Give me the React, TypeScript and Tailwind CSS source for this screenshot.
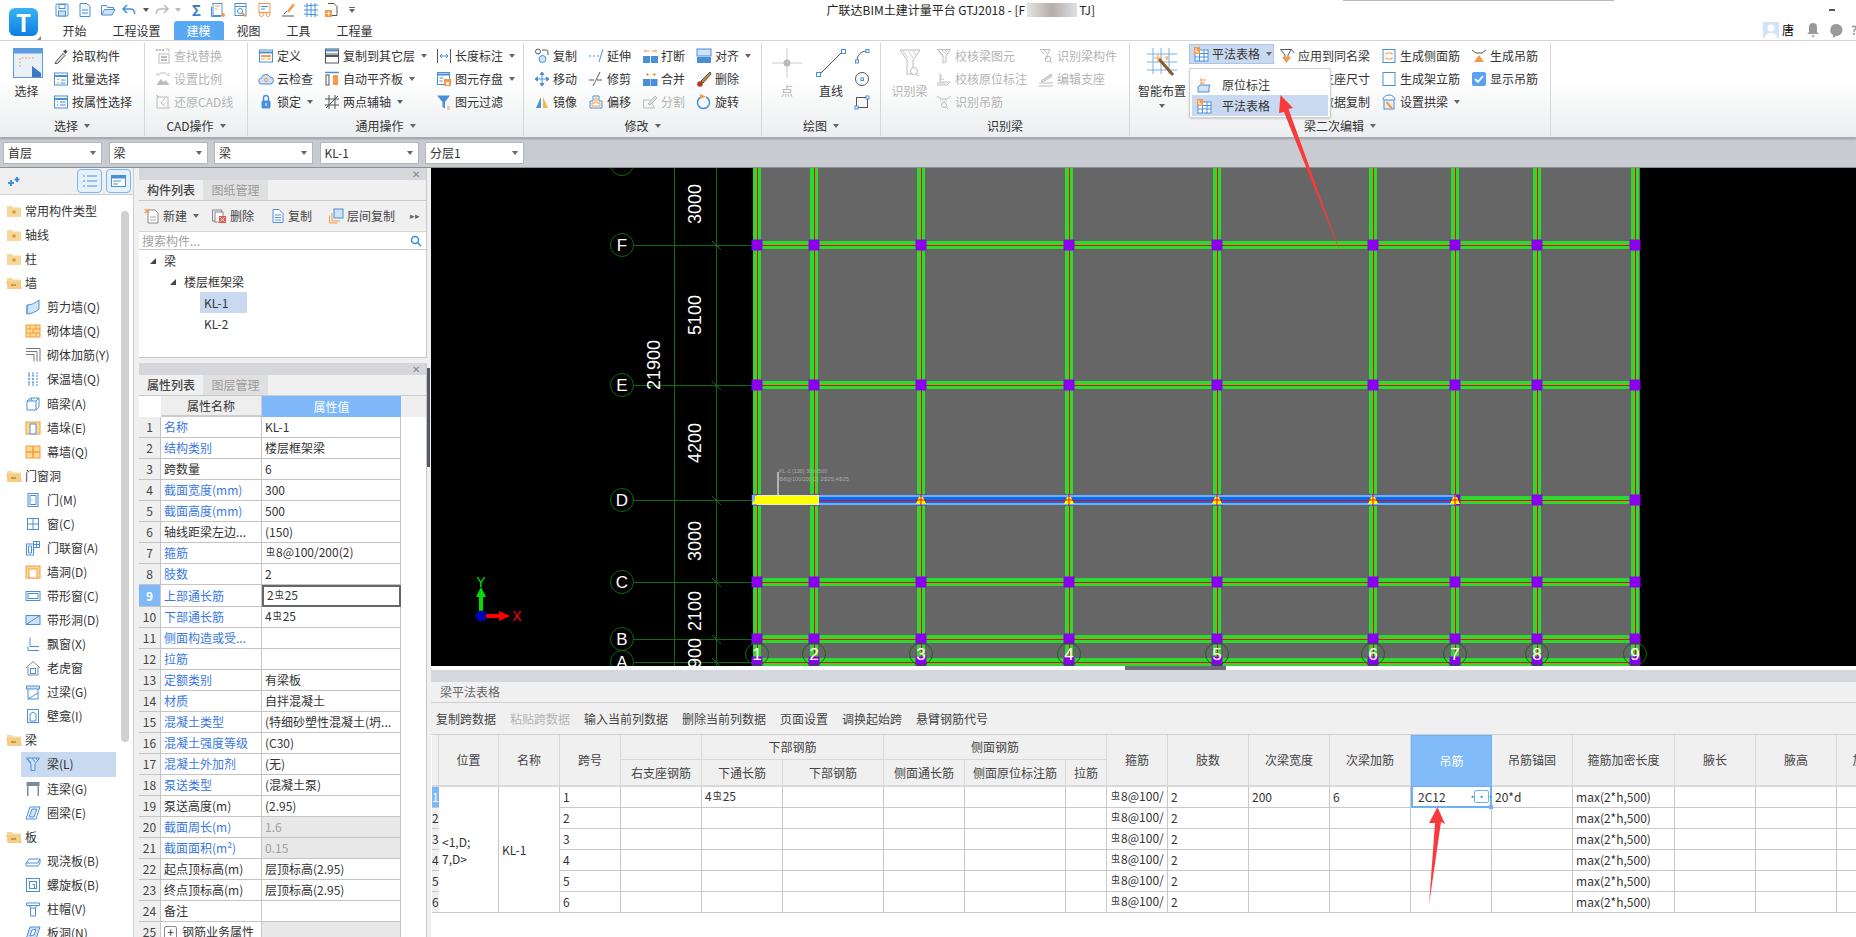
import React from 'react'

const B = '#4a90d9'
const O = '#f59a4a'
const G = '#bcbcbc'
const D = '#555'
const L = '#cfe2f7'

const icons: Record<string, React.ReactNode> = {
  save: <><rect x="2" y="2" width="12" height="12" rx="1" stroke={B} /><rect x="5" y="2.5" width="6" height="4" stroke={B} /><rect x="4.5" y="9" width="7" height="5" fill={L} stroke={B} /></>,
  newdoc: <><path d="M3 1.5h7l3 3v10H3z" stroke={B} fill="#eef5fc" /><path d="M5 8h6M5 11h6" stroke={B} /></>,
  open: <><path d="M1.5 13V3.5h5l1 2h6V8" stroke={B} /><path d="M1.5 13l3-5.5h10.5L12 13z" stroke={B} fill={L} /></>,
  undo: <path d="M6 3L2 7l4 4M2.5 7H10a4 4 0 0 1 3.5 5" stroke={B} strokeWidth="1.6" />,
  redo: <path d="M10 3l4 4-4 4M13.5 7H6a4 4 0 0 0-3.5 5" stroke={G} strokeWidth="1.6" />,
  report: <><rect x="3" y="1.5" width="9" height="12" stroke={B} /><path d="M5 4h5M5 7h2" stroke={O} /><path d="M1.5 5v9.5H11" stroke={B} /><circle cx="13" cy="13" r="2" fill={O} /></>,
  viewrep: <><rect x="2" y="1.5" width="11" height="12" stroke={B} /><path d="M2 4.5h11" stroke={B} /><circle cx="7" cy="9" r="2.5" stroke={B} /><path d="M9 11l4 3.5" stroke={O} strokeWidth="2" /></>,
  glasses: <><rect x="2" y="1.5" width="11" height="9" stroke={O} /><path d="M4 4.5h7M4 7h4" stroke={B} /><circle cx="4.5" cy="12.5" r="2" stroke={O} /><circle cx="11" cy="12.5" r="2" stroke={O} /></>,
  brush: <><path d="M13 1.5L7 9l2 1.5L15 3z" fill={O} /><path d="M7 9l-3 3M2 14h12" stroke={D} /></>,
  gridq: <path d="M4 1v14M8 1v14M12 1v14M1 4l14-1M1 8h14M1 12l14 1" stroke={B} />,
  docplus: <><path d="M4 1.5h6l3 3v9H8" stroke={D} /><rect x="1" y="8" width="7" height="7" fill={O} /><path d="M4.5 9.5v4M2.5 11.5h4" stroke="#fff" /></>,
  pick: <><path d="M3 13.5l7-8 2 2-7 7.5-3 1z" fill="#ddd" stroke={D} /><path d="M10 3.5l2.5-2 2 2-2 2.5z" fill={D} /></>,
  batch: <><rect x="1.5" y="2" width="13" height="12" stroke={B} /><path d="M1.5 5h13" stroke={B} strokeWidth="2" /><path d="M4 8l1 1 1.5-1.5M4 11.5l1 1 1.5-1.5" stroke={O} /><path d="M8 9h4.5M8 12h4.5" stroke={B} /></>,
  attr: <><rect x="1.5" y="2" width="13" height="12" stroke={B} /><path d="M1.5 5h13" stroke={B} strokeWidth="2" /><path d="M4 8h1M4 11h1M7 8h5.5M7 11h5.5" stroke={B} /></>,
  find: <><rect x="4" y="6" width="10" height="9" stroke={G} /><path d="M6 9h6M6 12h6M1 2h2M4 2h2M7 2h2" stroke={G} strokeWidth="2" /><path d="M11 1h3v3" stroke={G} /></>,
  scale: <><path d="M2 2v3M14 2v3M5 2h6M5 4l-2-1M11 4l2-1" stroke={G} /><path d="M1.5 14l4-6 3 3 2-2 4 5z" fill={G} /></>,
  restore: <><rect x="2" y="3" width="11" height="11" stroke={G} /><path d="M6 9l4-5M6 9l4 3M1 1l3 2M13 15l2-2" stroke={G} /></>,
  define: <><rect x="1.5" y="2" width="13" height="12" fill="#fff" stroke={B} /><path d="M1.5 4.5h13" stroke={B} strokeWidth="2" /><rect x="3" y="7" width="10" height="2" fill={O} /><path d="M3 11h4M9 11h4" stroke={O} /></>,
  cloud: <><path d="M4 13a3 3 0 0 1-.5-6 4.5 4.5 0 0 1 8.5-1 3.5 3.5 0 0 1 0 7z" fill={L} stroke={B} /><circle cx="8" cy="9" r="1.7" stroke={O} /></>,
  lock: <><rect x="3.5" y="6.5" width="9" height="8" rx="1.5" fill={B} /><path d="M5.5 7V4a2.5 2.5 0 0 1 5 0v3" stroke={B} strokeWidth="1.5" /><rect x="7.5" y="9" width="1" height="3" fill="#fff" /></>,
  copylayer: <><rect x="1.5" y="1" width="13" height="7" fill="#fff" stroke={D} /><path d="M1.5 2.5h13" stroke={B} strokeWidth="2" /><rect x="1.5" y="6" width="13" height="9" fill="#fff" stroke={D} /><path d="M1.5 8h13" stroke={D} strokeWidth="2" /></>,
  autoalign: <><path d="M1 1.5h14" stroke={B} strokeWidth="1.5" /><rect x="2" y="4" width="3" height="10" stroke={D} /><rect x="9" y="4" width="5" height="10" fill={O} /></>,
  twopoint: <path d="M5 1v14M11 1v14M1 5h14M1 11h14M2 14L14 2" stroke={D} />,
  dim: <><path d="M1.5 1v14M14.5 1v14" stroke={D} /><path d="M4 8h8M4 8l2-2M4 8l2 2M12 8l-2-2M12 8l-2 2" stroke={B} /></>,
  store: <><rect x="1.5" y="1.5" width="12" height="12" stroke={B} /><path d="M1.5 3.5h12" stroke={B} strokeWidth="2" /><path d="M3.5 7h4M3.5 10h3" stroke={B} /><rect x="8" y="8" width="7" height="7" fill={O} /><rect x="10" y="11" width="3" height="3" fill="#fff" /></>,
  filter: <><path d="M1 1.5h13L9 8v6.5L6.5 13V8z" fill={B} /><path d="M11 13h3M11 15h3" stroke={O} /></>,
  copy: <><circle cx="4" cy="3.5" r="2.5" stroke={D} /><circle cx="8.5" cy="11" r="3.5" fill={L} stroke={B} /><path d="M8 2h4a2 2 0 0 1 2 2v3" stroke={D} /></>,
  move: <path d="M8 1v14M1 8h14M8 1L6 3.5h4zM8 15l-2-2.500h4zM1 8l2.500-2v4zM15 8l-2.500-2v4z" stroke={B} fill={B} />,
  mirror: <><path d="M7 3v11H2z" fill={B} /><path d="M9 3v11h5z" fill="#f5b73d" /></>,
  extend: <path d="M1 8h2M5 8h2M9 8h2M15 1L11 14" stroke={B} />,
  trim: <path d="M1 9h5M9 9h5M12 1L5 15" stroke={D} strokeDasharray="3 0" />,
  offset: <><path d="M2 14V7h3V2h6v5h3v7z" stroke={B} fill="#fff" /><path d="M4 12V9h3V4h2v5h3v3z" stroke={O} /></>,
  breakb: <><path d="M3 3h4M10 3h4M3 1.500v3M14 1.500v3" stroke={O} /><rect x="1" y="8" width="7" height="7" fill={B} /><rect x="9" y="8" width="7" height="7" fill={B} /></>,
  merge: <><path d="M4 3.500h3M11 3.500h3M5.500 2v3M12.500 2v3" stroke={O} /><rect x="1" y="8" width="7" height="7" fill={B} /><rect x="8.500" y="8" width="7" height="7" fill={B} /></>,
  split: <><path d="M1.500 14V6h7l4 8z" stroke={G} /><path d="M6 10l7-8 2 2-7 7z" fill="#ddd" stroke={G} /></>,
  align: <><rect x="1" y="1" width="14" height="7" fill={L} stroke={B} /><rect x="1" y="9" width="14" height="6" fill={B} /></>,
  erase: <><path d="M14 1L5 10l2 2 8-9z" fill="#c98a3a" stroke={D} /><circle cx="4" cy="13" r="2.800" fill="#b4381c" /></>,
  rotate: <><path d="M5 3a6 6 0 1 0 5 0" stroke={B} strokeWidth="1.500" /><path d="M4 0l6 2.500-6 2.500z" fill={O} /></>,
  arc: <><path d="M3 13C3 7 7 3 13 3" stroke={D} /><rect x="1.500" y="12" width="3" height="3" stroke={B} fill="#fff" /><rect x="12" y="1.500" width="3" height="3" stroke={B} fill="#fff" /></>,
  circle: <><circle cx="8" cy="8" r="6.500" stroke={D} /><rect x="7" y="7" width="2.500" height="2.500" stroke={B} /></>,
  rect: <><rect x="2.500" y="3.500" width="11" height="10" stroke={D} /><rect x="1" y="12" width="3" height="3" stroke={B} fill="#fff" /><rect x="12" y="2" width="3" height="3" stroke={B} fill="#fff" /></>,
  chkbeam: <><path d="M1.500 1.500h13L10 8v6L7 15V8z" stroke={G} /><path d="M3 3l4 4M6 2l4 4M9 2l2 2" stroke={G} /></>,
  chksite: <><path d="M2 14h9l3-3H4V2" stroke={G} /><path d="M4 8h4M4 5h2" stroke={G} /><rect x="1" y="11" width="9" height="4" fill="#ddd" /></>,
  hang: <><path d="M1 2l4 3h6l4-3" stroke={G} /><path d="M4 7h8" stroke={G} strokeDasharray="1 1" /><circle cx="8" cy="11" r="2.500" stroke={G} /><path d="M10 13l2 2" stroke={G} /></>,
  beamc: <><path d="M2 1.500h10L9 7v4" stroke={G} /><path d="M3 3l3 3M6 2l3 3" stroke={G} /><circle cx="10" cy="11" r="2.800" stroke={G} /><path d="M12 13l2 2" stroke={G} /></>,
  editsup: <><path d="M1 12h14M1 15h14" stroke={G} /><path d="M3 10L13 3l1 2-9 6z" fill="#ddd" stroke={G} /></>,
  table: <><rect x="2" y="4" width="13" height="11" fill="#fff" stroke={B} /><path d="M6.500 4v11M11 4v11M2 7.500h13M2 11h13" stroke={B} /><rect x="1" y="1" width="6" height="7" fill={O} /><path d="M3 2.500V6h2.500" stroke="#fff" /></>,
  inplace: <><path d="M5 1v7M5 3h5M5 6h4" stroke={O} /><path d="M2 10l2-2h10l-1 2v5H2z" fill={L} stroke={B} /></>,
  apply: <><path d="M1.500 1.500h11L9 7v3H6V7z" stroke={D} /><path d="M13 1.500L15 5" stroke={B} /><path d="M3 9h9l-4.500 6z" fill={O} /></>,
  side: <><rect x="2" y="1.500" width="12" height="13" stroke={B} /><path d="M5 7V5h6v2M5 9v2h6V9" stroke={O} /></>,
  erect: <><rect x="2" y="1.500" width="12" height="13" stroke={B} /><path d="M6 5h.1M10 5h.1M6 11h.1M10 11h.1" stroke={O} strokeWidth="2.500" /></>,
  arch: <><path d="M2 6a6 5 0 0 1 12 0" stroke={B} /><rect x="3" y="6" width="10" height="9" fill="#eee" stroke={B} /><path d="M6 7l6 7-2 1-5-6z" fill={O} /></>,
  genhang: <><path d="M1 2l4 3h6l4-3" stroke={D} /><path d="M3 14h10L8 7z" fill={O} /></>,
  check: <><rect x="1" y="1" width="14" height="14" rx="2" fill="#5aa2f0" /><path d="M4 8l3 3 5-6" stroke="#fff" strokeWidth="1.800" /></>,
  shear: <><path d="M2 6c4 0 9-2 12-5v9c-3 3-8 5-12 5z" fill={L} stroke={B} /><path d="M2 6v9" stroke={B} /></>,
  brick: <><rect x="1" y="2" width="14" height="12" fill="#fbdc8b" stroke={O} /><path d="M1 6h14M1 10h14M5 2v4M11 2v4M8 6v4M5 10v4M11 10v4" stroke={O} /></>,
  rein: <path d="M1 1.500h14v13M1 4.500h11v10M1 7.500h8v7" stroke="#777" />,
  insul: <path d="M4 1v14M8 1v14M12 1v14M3 4h2M3 8h2M3 12h2M7 4h2M7 8h2M7 12h2" stroke={B} strokeDasharray="2 1" />,
  hidden: <><path d="M2 5l4-3h8v9l-3 3H2z" fill="#fff" stroke={B} /><path d="M2 5h9v9M11 5l3-3M6 2l1 3" stroke={B} /></>,
  pilaster: <><rect x="1" y="2" width="14" height="12" fill="#fbdc8b" stroke={O} /><rect x="5" y="4" width="6" height="10" fill="#fff" stroke={B} /></>,
  curtain: <><rect x="1" y="2" width="14" height="12" fill="#fbdc8b" stroke={O} /><path d="M8 2v12M1 8h14" stroke={O} strokeWidth="1.500" /></>,
  door: <><rect x="3" y="1.500" width="10" height="13" stroke={B} /><rect x="5" y="3.500" width="6" height="9" stroke={B} /><path d="M6.500 8h1" stroke={B} /></>,
  win: <><rect x="2.500" y="2.500" width="11" height="11" stroke={B} /><path d="M8 2.500v11M2.500 8h11" stroke={B} /></>,
  doorwin: <><rect x="1.500" y="4" width="7" height="11" stroke={B} /><path d="M3.500 6h3v7h-3z" stroke={B} /><rect x="8.500" y="1.500" width="6" height="6" stroke={B} /><path d="M11.500 1.500v6M8.500 4.500h6" stroke={B} /></>,
  hole: <><rect x="1" y="2" width="14" height="12" fill="#fbdc8b" stroke={O} /><rect x="4" y="5" width="8" height="9" fill="#fff" stroke={O} /></>,
  strip: <><rect x="1" y="3.500" width="14" height="9" stroke={B} /><rect x="3" y="5.500" width="10" height="5" stroke={B} /></>,
  striph: <><rect x="1" y="3.500" width="14" height="9" stroke={B} fill={L} /><path d="M1 12.500L15 3.500" stroke={B} /></>,
  bay: <path d="M5 1.500v9h9M3 10.500v4h11" stroke={B} />,
  dormer: <><path d="M1 8l7-6.500L15 8M3 7v8h10V7" stroke="#888" /><rect x="5.500" y="8.500" width="5" height="5" stroke={B} /></>,
  lintel: <><path d="M1.500 2h13v3h-13z" stroke={B} fill={L} /><path d="M3 5v10h10V5" stroke={B} /><path d="M3 15l10-6" stroke={B} /></>,
  niche: <><rect x="2.500" y="1.500" width="11" height="13" stroke={B} /><path d="M5 13V6l3-2 3 2v7z" stroke={B} /></>,
  beam: <><path d="M1.500 2h13L10 8v6.500H6V8z" stroke={B} fill={L} /><path d="M3 3l3 4M7 2l3 4M11 2l1 2" stroke={B} /></>,
  link: <><rect x="1.500" y="1" width="13" height="4" fill="#7a8aa0" /><path d="M3 5v10M13 5v10M2.500 5v10M13.500 5v10" stroke="#7a8aa0" /></>,
  ring: <><path d="M5 2h10l-4 12H1z" stroke={B} /><path d="M7 4h5l-3 8H4z" stroke={B} fill={L} /></>,
  slab: <><path d="M1 10l3-4h11l-2 4z" stroke={B} fill="#fff" /><path d="M1 10v3h12l2-3V6" stroke={B} /></>,
  spiral: <><rect x="1.500" y="1.500" width="13" height="13" stroke={B} /><rect x="4.500" y="4.500" width="7" height="7" stroke={B} /><path d="M7.500 7.500h2v4" stroke={B} /></>,
  cap: <><path d="M1.500 2h13v2.500h-13zM4 4.500l2 2.500h4l2-2.500M5.500 7v8h5V7" stroke={B} /></>,
  slabh: <><path d="M5 2h10l-4 12H1z" fill={L} stroke={B} /><path d="M7 5l4-1-2 6-4 1z" fill="#fff" stroke={B} /></>,
  pnew: <><path d="M4 2h7l3 3v10H4z" fill="#fff" stroke="#888" /><path d="M6 9h6M6 12h6" stroke="#aaa" /><path d="M1 1l4 4M5 1L1 5" stroke={O} strokeWidth="1.500" /></>,
  pdel: <><rect x="1.500" y="2" width="9" height="11" stroke="#888" /><rect x="4" y="4" width="8" height="10" fill="#fff" stroke="#888" /><rect x="8" y="8" width="7" height="7" fill="#e45a4a" /><path d="M9.500 9.500l4 4M13.500 9.500l-4 4" stroke="#fff" /></>,
  pcopy: <><path d="M3 1.500h6l4 4v9H3z" fill="#fff" stroke={B} /><path d="M5 7h6M5 9.500h6M5 12h6" stroke={B} /></>,
  player: <><rect x="6" y="1" width="9" height="9" fill={L} stroke={B} /><path d="M4 5v8h8M1.500 7.500V15h8" stroke={O} /></>,
}

function Ic({ n, s = 16 }: { n: string; s?: number }) {
  return <svg width={s} height={s} viewBox="0 0 16 16" fill="none" className="flex-none">{icons[n]}</svg>
}

function Caret() {
  return <span className="ml-[6px] inline-block border-x-[3px] border-t-[4px] border-x-transparent border-t-[#666]" />
}

function Item({ icon, label, arrow, off }: { icon: string; label: string; arrow?: boolean; off?: boolean }) {
  return (
    <div className="flex h-[23px] items-center whitespace-nowrap">
      <span className="w-[19px] flex-none"><Ic n={icon} /></span>
      <span className={off ? 'text-[#b4b4b4]' : ''}>{label}</span>
      {arrow && <Caret />}
    </div>
  )
}

function Col({ w, children }: { w: number; children: React.ReactNode }) {
  return <div className="flex flex-none flex-col" style={{ width: w }}>{children}</div>
}

function Group({ w, pl, label, arrow, children }: { w: number; pl: number; label: string; arrow?: boolean; children: React.ReactNode }) {
  return (
    <div className="flex flex-none flex-col border-r border-[#d4d6d8] h-[93px]" style={{ width: w }}>
      <div className="flex h-[73px] pt-[1px]" style={{ paddingLeft: pl }}>{children}</div>
      <div className="flex h-[20px] items-center justify-center">{label}{arrow && <Caret />}</div>
    </div>
  )
}

function Big({ w, label, off, children, arrow }: { w: number; label: string; off?: boolean; children: React.ReactNode; arrow?: boolean }) {
  return (
    <div className="flex flex-none flex-col items-center" style={{ width: w }}>
      <div className="flex h-[34px] items-center justify-center">{children}</div>
      <div className={`mt-[5px] whitespace-nowrap ${off ? 'text-[#b4b4b4]' : ''}`}>{label}</div>
      {arrow && <span className="mt-[5px] inline-block border-x-[3px] border-t-[4px] border-x-transparent border-t-[#666]" />}
    </div>
  )
}

const quick: [string, number][] = [['save', 24], ['newdoc', 23], ['open', 23], ['undo', 18.5], ['', 15.5], ['redo', 16], ['', 17], ['S', 20], ['report', 22], ['viewrep', 24], ['glasses', 24], ['brush', 23.5], ['gridq', 22], ['docplus', 20.5], ['more', 18]]

function TitleBar() {
  return (
    <div className="relative flex h-[41px] border-b border-[#d8d8d8] bg-white">
      <div className="relative w-[49.5px] flex-none">
        <div className="absolute left-[9px] top-[8px] flex h-[28px] w-[29px] items-center justify-center rounded-[6px] bg-linear-to-b from-[#35b4f2] to-[#0f7fe0]">
          <span className="text-[24px] font-bold leading-none text-white">T</span>
        </div>
        <span className="absolute left-[37px] top-[36px] border-b-[4px] border-l-[4px] border-b-[#888] border-l-transparent" />
      </div>
      <div className="flex flex-1 flex-col">
        <div className="flex h-[21px] items-center">
          {quick.map(([n, w], i) => (
            <div key={i} className="flex h-[16px] items-center justify-center" style={{ width: w }}>
              {n === 'S' ? <span className="text-[15px] font-bold leading-[16px] text-[#3f7fc4]">Σ</span>
                : n === '' ? <span className={`border-x-[3px] border-t-[4px] border-x-transparent ${i === 4 ? 'border-t-[#555]' : 'border-t-[#bbb]'}`} />
                : n === 'more' ? <span className="flex flex-col items-center gap-[1px]"><span className="h-[1px] w-[6px] bg-[#666]" /><span className="border-x-[3px] border-t-[4px] border-x-transparent border-t-[#666]" /></span>
                : <Ic n={n} />}
            </div>
          ))}
          <div className="ml-[466px] flex items-center whitespace-nowrap text-[#222]">
            <span>广联达BIM土建计量平台 GTJ2018 - [F</span>
            <span className="mx-[2px] h-[14px] w-[50px] bg-linear-to-r from-[#e4e4e4] via-[#b5ada8] to-[#dfdfe6]" />
            <span>TJ]</span>
          </div>
          <span className="ml-auto mr-[21px] h-[2px] w-[6px] bg-[#555]" />
        </div>
        <div className="flex h-[20px] items-end">
          {['开始', '工程设置', '建模', '视图', '工具', '工程量'].map(t => (
            <div key={t} className={`flex h-[19px] items-center px-[13px] ${t === '建模' ? 'rounded-t-[3px] bg-[#58a8f2] text-white' : ''}`}>{t}</div>
          ))}
          <div className="ml-auto flex h-[20px] items-center">
            <div className="flex h-[16px] w-[16px] items-center justify-center bg-[#cfe4fb]">
              <svg width="12" height="16" viewBox="0 0 12 16"><circle cx="6" cy="6" r="3.500" fill="#fff" /><path d="M0 16c0-4 3-5 6-5s6 1 6 5z" fill="#fff" /></svg>
            </div>
            <span className="ml-[3px] w-[24px] text-black">唐</span>
            <svg width="14" height="16" viewBox="0 0 14 16" className="mr-[9px]"><path d="M7 1a4 4 0 0 0-4 4v5l-2 2h12l-2-2V5a4 4 0 0 0-4-4zM5 13.500h4l-2 2z" fill="#999" /></svg>
            <svg width="15" height="15" viewBox="0 0 15 15" className="mr-[7px]"><path d="M7.500 1a6 6 0 0 1 0 12H7l-3 2v-3A6 6 0 0 1 7.500 1z" fill="#999" /><path d="M4.500 7h.1M7.500 7h.1M10.500 7h.1" stroke="#fff" strokeWidth="1.500" /></svg>
            <span className="w-[5px] overflow-hidden font-bold text-[#999]">?</span>
          </div>
        </div>
      </div>
      <div className="absolute left-[1343px] top-0 h-[1px] w-[271px] bg-[#bbb]" />
    </div>
  )
}

function Ribbon() {
  return (
    <div className="relative flex h-[97px] flex-none items-start border-b border-[#a6a9ad] bg-linear-to-b from-white from-40% to-[#eceeef] pt-[2px] shadow-[0_1px_2px_#9a9da1]">
      <Group w={145} pl={0} label="选择" arrow>
        <Big w={53} label="选择">
          <svg width="30" height="30" viewBox="0 0 30 30" className="ml-[2px] mt-[4px]"><rect x="0.500" y="0.500" width="29" height="29" fill="#eaf0f8" stroke="#5b9be0" /><rect x="0.500" y="0.500" width="29" height="5" fill="#5b9be0" /><path d="M7 19V10h14" stroke="#f59a4a" strokeDasharray="2 1.500" fill="none" /><path d="M19 18l9 7v4H19z" fill="#3d78c0" /></svg>
        </Big>
        <Col w={90}>
          <Item icon="pick" label="拾取构件" />
          <Item icon="batch" label="批量选择" />
          <Item icon="attr" label="按属性选择" />
        </Col>
      </Group>
      <Group w={103} pl={10} label="CAD操作" arrow>
        <Col w={90}>
          <Item icon="find" label="查找替换" off />
          <Item icon="scale" label="设置比例" off />
          <Item icon="restore" label="还原CAD线" off />
        </Col>
      </Group>
      <Group w={276} pl={10} label="通用操作" arrow>
        <Col w={66}>
          <Item icon="define" label="定义" />
          <Item icon="cloud" label="云检查" />
          <Item icon="lock" label="锁定" arrow />
        </Col>
        <Col w={112}>
          <Item icon="copylayer" label="复制到其它层" arrow />
          <Item icon="autoalign" label="自动平齐板" arrow />
          <Item icon="twopoint" label="两点辅轴" arrow />
        </Col>
        <Col w={88}>
          <Item icon="dim" label="长度标注" arrow />
          <Item icon="store" label="图元存盘" arrow />
          <Item icon="filter" label="图元过滤" />
        </Col>
      </Group>
      <Group w={238} pl={10} label="修改" arrow>
        <Col w={54}>
          <Item icon="copy" label="复制" />
          <Item icon="move" label="移动" />
          <Item icon="mirror" label="镜像" />
        </Col>
        <Col w={54}>
          <Item icon="extend" label="延伸" />
          <Item icon="trim" label="修剪" />
          <Item icon="offset" label="偏移" />
        </Col>
        <Col w={54}>
          <Item icon="breakb" label="打断" />
          <Item icon="merge" label="合并" />
          <Item icon="split" label="分割" off />
        </Col>
        <Col w={66}>
          <Item icon="align" label="对齐" arrow />
          <Item icon="erase" label="删除" />
          <Item icon="rotate" label="旋转" />
        </Col>
      </Group>
      <Group w={119} pl={0} label="绘图" arrow>
        <Big w={50} label="点" off>
          <svg width="30" height="30" viewBox="0 0 30 30" className="mt-[4px]"><path d="M15 0v30M0 15h30" stroke="#ccc" /><circle cx="15" cy="15" r="3.500" fill="#bbb" /></svg>
        </Big>
        <Big w={38} label="直线">
          <svg width="30" height="30" viewBox="0 0 30 30" className="mt-[4px]"><path d="M3 27L27 3" stroke="#555" /><rect x="0.500" y="24.500" width="4" height="4" fill="#fff" stroke="#4a90d9" /><rect x="25.500" y="1.500" width="4" height="4" fill="#fff" stroke="#4a90d9" /></svg>
        </Big>
        <Col w={20}>
          <div className="ml-[4px] flex h-[23px] items-center"><Ic n="arc" /></div>
          <div className="ml-[4px] flex h-[23px] items-center"><Ic n="circle" /></div>
          <div className="ml-[4px] flex h-[23px] items-center"><Ic n="rect" /></div>
        </Col>
      </Group>
      <Group w={249} pl={10} label="识别梁">
        <Big w={37} label="识别梁" off>
          <svg width="22" height="28" viewBox="0 0 22 28" className="mt-[4px]"><path d="M1 1h20l-7 10v14h-6V11z" fill="none" stroke="#bbb" /><path d="M4 2l5 7M9 2l5 7M14 2l4 5" stroke="#ccc" /><circle cx="15" cy="22" r="3.500" fill="#fff" stroke="#bbb" /><path d="M17 25l3 2" stroke="#bbb" /></svg>
        </Big>
        <div className="w-[8px] flex-none" />
        <Col w={102}>
          <Item icon="chkbeam" label="校核梁图元" off />
          <Item icon="chksite" label="校核原位标注" off />
          <Item icon="hang" label="识别吊筋" off />
        </Col>
        <Col w={90}>
          <Item icon="beamc" label="识别梁构件" off />
          <Item icon="editsup" label="编辑支座" off />
        </Col>
      </Group>
      <Group w={421} pl={8} label="" >
        <Big w={48} label="智能布置" arrow>
          <svg width="30" height="30" viewBox="0 0 30 30" className="mt-[4px]"><path d="M6 0v26M14 0v26M22 0v26M0 6h30M0 14h30M0 22h30" stroke="#7db0e8" /><path d="M12 11l14 16" stroke="#8b5a2b" strokeWidth="3" /><path d="M11 6v8M7 10h8M20 8v4M18 10h4" stroke="#f59a4a" /></svg>
        </Big>
        <div className="w-[3px] flex-none" />
        <Col w={90}>
          <div className="flex h-[20px] w-[85px] items-center border border-[#a9c5e8] bg-[#c9daf0] pl-[3px]">
            <span className="w-[19px] flex-none"><Ic n="table" /></span>
            <span>平法表格</span><Caret />
          </div>
        </Col>
        <Col w={102}>
          <Item icon="apply" label="应用到同名梁" />
          <Item icon="apply" label="刷新支座尺寸" />
          <Item icon="apply" label="梁跨数据复制" />
        </Col>
        <Col w={90}>
          <Item icon="side" label="生成侧面筋" />
          <Item icon="erect" label="生成架立筋" />
          <Item icon="arch" label="设置拱梁" arrow />
        </Col>
        <Col w={70}>
          <Item icon="genhang" label="生成吊筋" />
          <Item icon="check" label="显示吊筋" />
        </Col>
      </Group>
      <div className="absolute left-[1304px] top-[75px] flex h-[20px] items-center whitespace-nowrap">梁二次编辑<Caret /></div>
      <div className="absolute left-[1189px] top-[27px] z-10 flex h-[50px] w-[142px] flex-col rounded-[2px] border border-[#cfcfcf] bg-white px-[2px] pt-[5px] shadow-[0_1px_2px_#ccc]">
        <div className="flex h-[21px] items-center pl-[4px]"><Ic n="inplace" /><span className="ml-[10px]">原位标注</span></div>
        <div className="flex h-[21px] items-center bg-[#c9daf0] pl-[4px]"><Ic n="table" /><span className="ml-[10px]">平法表格</span></div>
      </div>
    </div>
  )
}

function Combo({ label }: { label: string }) {
  return (
    <div className="flex h-[22px] w-[99px] items-center justify-between border border-[#b4b6b9] bg-white px-[4px]">
      <span>{label}</span>
      <span className="mr-[1px] border-x-[3px] border-t-[4px] border-x-transparent border-t-[#666]" />
    </div>
  )
}

const tree: [string, string, number][] = [
  ['常用构件类型', 'c', 0], ['轴线', 'c', 0], ['柱', 'c', 0], ['墙', 'o', 0],
  ['剪力墙(Q)', 'shear', 1], ['砌体墙(Q)', 'brick', 1], ['砌体加筋(Y)', 'rein', 1], ['保温墙(Q)', 'insul', 1], ['暗梁(A)', 'hidden', 1], ['墙垛(E)', 'pilaster', 1], ['幕墙(Q)', 'curtain', 1],
  ['门窗洞', 'o', 0],
  ['门(M)', 'door', 1], ['窗(C)', 'win', 1], ['门联窗(A)', 'doorwin', 1], ['墙洞(D)', 'hole', 1], ['带形窗(C)', 'strip', 1], ['带形洞(D)', 'striph', 1], ['飘窗(X)', 'bay', 1], ['老虎窗', 'dormer', 1], ['过梁(G)', 'lintel', 1], ['壁龛(I)', 'niche', 1],
  ['梁', 'o', 0],
  ['梁(L)', 'beam', 1], ['连梁(G)', 'link', 1], ['圈梁(E)', 'ring', 1],
  ['板', 'o', 0],
  ['现浇板(B)', 'slab', 1], ['螺旋板(B)', 'spiral', 1], ['柱帽(V)', 'cap', 1], ['板洞(N)', 'slabh', 1],
]

function Folder({ open }: { open: boolean }) {
  return (
    <svg width="16" height="14" viewBox="0 0 16 14" className="flex-none">
      <path d="M1 2h5l1 1.500h8V13H1z" fill="#f7d89a" />
      {open ? <path d="M0 5h14l2 8H2z" fill="#f3cd85" /> : <path d="M6 8h4M8 6v4" stroke="#d69a3c" strokeWidth="1.500" />}
      {open && <path d="M5 9h5" stroke="#b98a36" strokeWidth="1.500" />}
    </svg>
  )
}

function LeftPanel() {
  return (
    <div className="flex w-[134px] flex-none flex-col border-r border-[#cfcfcf] bg-white">
      <div className="flex h-[27px] flex-none items-center border-b border-[#cfcfcf] bg-[#f0f0f0] pl-[7px]">
        <svg width="13" height="11" viewBox="0 0 13 11"><path d="M4 4v6M1 7h6" stroke="#3f8fe0" strokeWidth="2" /><path d="M10 1v5M7.500 3.500h5" stroke="#3f8fe0" strokeWidth="2" /></svg>
        <div className="ml-[57px] flex h-[24px] w-[25px] items-center justify-center rounded-[4px] border border-[#7ab5f2] bg-[#e7f1fc]">
          <svg width="14" height="12" viewBox="0 0 14 12"><path d="M4 1h10M4 6h10M4 11h10M0 1h2M0 6h2M0 11h2" stroke="#4a90d9" /></svg>
        </div>
        <div className="ml-[4px] flex h-[24px] w-[25px] items-center justify-center rounded-[4px] border border-[#7ab5f2] bg-[#e7f1fc]">
          <svg width="15" height="12" viewBox="0 0 15 12"><rect x="0.500" y="0.500" width="14" height="11" fill="#fff" stroke="#4a90d9" /><path d="M0 2h15" stroke="#4a90d9" strokeWidth="3" /><path d="M2 6h8M2 9h5" stroke="#4a90d9" /></svg>
        </div>
      </div>
      <div className="relative flex-1 overflow-hidden pt-[4px]">
        {tree.map(([t, ic, lv]) => {
          const sel = t === '梁(L)'
          return lv === 0 ? (
            <div key={t} className="flex h-[24.07px] items-center pl-[6px]">
              <Folder open={ic === 'o'} /><span className="ml-[3px]">{t}</span>
            </div>
          ) : (
            <div key={t} className={`ml-[21px] mr-[17px] flex h-[24.07px] items-center pl-[4px] ${sel ? 'bg-[#c9daf0]' : ''}`}>
              <Ic n={ic} /><span className="ml-[6px] whitespace-nowrap">{t}</span>
            </div>
          )
        })}
        <div className="absolute left-[121px] top-[16px] h-[531px] w-[8px] rounded-[4px] bg-[#d0d0d0]" />
      </div>
    </div>
  )
}

function PanelHead({ a, b }: { a: string; b: string }) {
  return (
    <>
      <div className="flex h-[12px] flex-none items-center justify-end bg-[#d5d7dc] pr-[6px]">
        <span className="text-[10px] leading-none text-[#888]">✕</span>
      </div>
      <div className="flex h-[21px] flex-none border-b border-[#c8c8c8] bg-[#f0f0f0]">
        <div className="flex w-[64px] items-center justify-center font-medium text-[#444]">{a}</div>
        <div className="flex w-[65px] items-center justify-center bg-[#e0e0e0] text-[#9a9a9a]">{b}</div>
      </div>
    </>
  )
}

function Rebar() {
  return <span className="relative top-[-2px] mx-[1px] text-[9px]">虫</span>
}

const props: [string, boolean, React.ReactNode, number?][] = [
  ['名称', true, 'KL-1'], ['结构类别', true, '楼层框架梁'], ['跨数量', false, '6'], ['截面宽度(mm)', true, '300'], ['截面高度(mm)', true, '500'],
  ['轴线距梁左边...', false, '(150)'], ['箍筋', true, <><Rebar />8@100/200(2)</>], ['肢数', true, '2'], ['上部通长筋', true, <>2<Rebar />25</>, 1], ['下部通长筋', true, <>4<Rebar />25</>],
  ['侧面构造或受...', true, ''], ['拉筋', true, ''], ['定额类别', true, '有梁板'], ['材质', true, '自拌混凝土'], ['混凝土类型', true, '(特细砂塑性混凝土(坍...'],
  ['混凝土强度等级', true, '(C30)'], ['混凝土外加剂', true, '(无)'], ['泵送类型', true, '(混凝土泵)'], ['泵送高度(m)', false, '(2.95)'], ['截面周长(m)', true, '1.6', 2],
  ['截面面积(m²)', true, '0.15', 2], ['起点顶标高(m)', false, '层顶标高(2.95)'], ['终点顶标高(m)', false, '层顶标高(2.95)'], ['备注', false, ''], ['钢筋业务属性', false, '', 3],
]

function PropTable() {
  return (
    <table className="w-[262px] table-fixed border-separate border-spacing-0">
      <colgroup><col className="w-[22px]" /><col className="w-[101px]" /><col className="w-[139px]" /></colgroup>
      <tbody>
        {props.map(([name, blue, val, k], i) => {
          const b = 'border-b border-r border-[#c4c4c4]'
          return (
            <tr key={i} className="h-[21px]">
              <td className={`${b} p-0 text-center ${k === 1 ? 'bg-[#7eb8f8] font-bold text-white' : 'bg-[#efefef] text-[#444]'}`}>{i + 1}</td>
              <td className={`${b} overflow-hidden whitespace-nowrap p-0 pl-[3px] ${blue ? 'text-[#3b78e0]' : ''}`}>
                {k === 3 ? <span className="flex items-center"><span className="mr-[5px] flex h-[13px] w-[13px] items-center justify-center rounded-[2px] border border-[#888]">+</span>{name}</span> : name}
              </td>
              <td className={`overflow-hidden whitespace-nowrap p-0 pl-[3px] ${k === 1 ? 'border-2 border-[#666]' : b} ${k === 2 ? 'bg-[#e8e8e8] text-[#a0a0a0]' : k === 3 ? 'bg-[#e8e8e8]' : ''}`}>{val}</td>
            </tr>
          )
        })}
      </tbody>
    </table>
  )
}

function MiddlePanel() {
  return (
    <div className="flex w-[288px] flex-none flex-col">
      <div className="flex h-[190px] flex-none flex-col border-b border-r border-[#c8c8c8] bg-white">
        <PanelHead a="构件列表" b="图纸管理" />
        <div className="flex h-[31px] flex-none items-center border-b border-[#d4d4d4] bg-[#f0f0f0] pl-[5px] text-[#444]">
          <Ic n="pnew" /><span className="ml-[3px]">新建</span><Caret />
          <span className="ml-[12px]"><Ic n="pdel" /></span><span className="ml-[3px]">删除</span>
          <span className="ml-[16px]"><Ic n="pcopy" /></span><span className="ml-[2px]">复制</span>
          <span className="ml-[16px]"><Ic n="player" /></span><span className="ml-[3px]">层间复制</span>
          <span className="ml-[15px] text-[9px] text-[#666]">▸▸</span>
        </div>
        <div className="flex h-[18px] flex-none items-center justify-between border-b border-[#c8c8c8] pl-[3px] pr-[4px] text-[#a0a0a0]">
          <span>搜索构件...</span>
          <svg width="12" height="12" viewBox="0 0 12 12"><circle cx="5" cy="5" r="3.500" fill="none" stroke="#2f8fd8" strokeWidth="1.500" /><path d="M7.500 7.500L11 11" stroke="#2f8fd8" strokeWidth="1.500" /></svg>
        </div>
        <div className="flex flex-1 flex-col">
          <div className="flex h-[21px] items-center pl-[11px]"><span className="mr-[8px] border-b-[6px] border-l-[6px] border-b-[#444] border-l-transparent" />梁</div>
          <div className="flex h-[21px] items-center pl-[31px]"><span className="mr-[8px] border-b-[6px] border-l-[6px] border-b-[#444] border-l-transparent" />楼层框架梁</div>
          <div className="ml-[61px] flex h-[21px] w-[47px] items-center bg-[#c9daf0] pl-[4px]">KL-1</div>
          <div className="ml-[61px] flex h-[21px] w-[47px] items-center pl-[4px]">KL-2</div>
        </div>
      </div>
      <div className="h-[5px] flex-none bg-[#f0f0f0]" />
      <div className="flex flex-1 flex-col overflow-hidden border-r border-[#c8c8c8] bg-white">
        <PanelHead a="属性列表" b="图层管理" />
        <div className="flex h-[21px] flex-none">
          <div className="w-[22px] flex-none bg-white" />
          <div className="flex w-[101px] flex-none items-center justify-center border-b-2 border-r border-[#ccc] bg-[#eeeeee]">属性名称</div>
          <div className="flex w-[139px] flex-none items-center justify-center bg-[#7eb8f8] text-white">属性值</div>
          <div className="flex-1 bg-[#efefef]" />
        </div>
        <PropTable />
      </div>
    </div>
  )
}

const colsX = [757, 814, 921, 1069, 1217, 1373, 1455, 1537, 1635]
const rowsY: [string, number][] = [['F', 245], ['E', 385], ['D', 500], ['C', 582], ['B', 639], ['A', 662]]
const dims: [string, number, number][] = [['3000', 695, 204], ['5100', 695, 315], ['4200', 695, 443], ['3000', 695, 541], ['2100', 695, 611], ['900', 695, 653], ['21900', 654, 365]]

function Canvas() {
  return (
    <svg width="1425" height="498" viewBox="431 168 1425 498" className="block flex-none" fontFamily="Liberation Sans, sans-serif">
      <rect x="431" y="168" width="1425" height="498" fill="#000" />
      <rect x="757" y="168" width="883" height="498" fill="#666" />
      <path d="M674.500 168V666M716.500 168V666" stroke="#0f6b0f" />
      {rowsY.map(([l, y]) => <path key={l} d={`M633 ${y + 0.5}H757M712 ${y - 4}L721 ${y + 5}`} stroke="#0f6b0f" />)}
      <circle cx="622" cy="164" r="11.500" fill="#000" stroke="#0f6b0f" />
      {rowsY.map(([l, y]) => (
        <g key={l}>
          <circle cx="622" cy={y} r="11.500" fill="#000" stroke="#0f6b0f" />
          <text x="622" y={y + 6} fill="#fff" fontSize="17" textAnchor="middle">{l}</text>
        </g>
      ))}
      {dims.map(([t, x, y], i) => (
        <text key={i} transform={`translate(${x + 6} ${y}) rotate(-90)`} fill="#fff" fontSize="18" textAnchor="middle">{t}</text>
      ))}
      {colsX.map(x => <rect key={x} x={x - 4} y="168" width="8" height="498" fill="#2ed92e" />)}
      {rowsY.map(([l, y]) => l === 'D'
        ? <rect key={l} x="1455" y={y - 4} width="181" height="8" fill="#2ed92e" />
        : <rect key={l} x="757" y={y - 4} width="880" height="8" fill="#2ed92e" />)}
      {colsX.map(x => <rect key={x} x={x} y="168" width="1" height="498" fill="#f00" />)}
      {rowsY.map(([l, y]) => <rect key={l} x={l === 'D' ? 1455 : 757} y={y} width={l === 'D' ? 181 : 880} height="1" fill="#f00" />)}
      {colsX.flatMap(x => rowsY.map(([l, y]) => <rect key={`${x}${l}`} x={x - 5.5} y={y - 5.5} width="11" height="11" fill="#8800ee" />))}
      <rect x="752" y="495" width="704" height="10" fill="#6fb0f8" />
      <rect x="757" y="497" width="698" height="6" fill="#0a6cf0" />
      <rect x="757" y="500" width="698" height="1" fill="#f00" />
      <rect x="757" y="495" width="62" height="10" fill="#e8f0c0" />
      <rect x="755" y="496" width="63" height="8" fill="#ff0" />
      <path d="M752 504l5-8h1v8z" fill="#ff0" />
      {[921, 1069, 1217, 1373, 1455].map(x => (
        <g key={x}>
          <path d={`M${x - 5} 504l3-7h4l3 7z`} fill="#ff0" />
          <path d={`M${x} 495v10M${x - 5} 500h10`} stroke="#f00" />
        </g>
      ))}
      <path d="M778 472V495" stroke="#fff" />
      <text x="779" y="473" fill="#aaa" fontSize="5.500">KL-1 [130] 300x500</text>
      <text x="779" y="481" fill="#aaa" fontSize="5.500">Φ8@100/200(2) 2Φ25;4Φ25</text>
      {colsX.map((x, i) => (
        <g key={x}>
          <ellipse cx={x} cy="654" rx="11.500" ry="11" fill="none" stroke="#0f6b0f" />
          <text x={x} y="660" fill="#fff" fontSize="17" textAnchor="middle">{i + 1}</text>
        </g>
      ))}
      <path d="M481 615V594" stroke="#00e000" strokeWidth="4" />
      <path d="M481 587l-5 10h10z" fill="#00e000" />
      <path d="M484 616H505" stroke="#f00" strokeWidth="4" />
      <path d="M510 616l-11-5v10z" fill="#f00" />
      <circle cx="481" cy="616" r="5.500" fill="#0000b4" />
      <text x="481" y="587" fill="#00e000" fontSize="14" textAnchor="middle">Y</text>
      <text x="517" y="621" fill="#f00" fontSize="14" textAnchor="middle">X</text>
    </svg>
  )
}

const widths = [7, 60, 61, 61, 81, 81, 101, 81, 101, 41, 61, 81, 81, 81, 81, 81, 102, 81, 81, 80]
const hd = 'border-b-2 border-r border-[#d8d8d8] bg-[#f0f0f0] p-0 text-center font-normal text-[#444]'
const cell = 'overflow-hidden whitespace-nowrap border-b border-r border-[#c8c8c8] p-0 pl-[3px]'

function BeamTable() {
  return (
    <table className="w-[1485px] table-fixed border-separate border-spacing-0">
      <colgroup>{widths.map((w, i) => <col key={i} style={{ width: w }} />)}</colgroup>
      <thead>
        <tr className="h-[25px]">
          <th rowSpan={2} className={hd} />
          <th rowSpan={2} className={hd}>位置</th>
          <th rowSpan={2} className={hd}>名称</th>
          <th rowSpan={2} className={hd}>跨号</th>
          <th className="border-b border-r border-[#d8d8d8] bg-[#f0f0f0] p-0" />
          <th colSpan={2} className="border-b border-r border-[#d8d8d8] bg-[#f0f0f0] p-0 font-normal text-[#444]">下部钢筋</th>
          <th colSpan={3} className="border-b border-r border-[#d8d8d8] bg-[#f0f0f0] p-0 font-normal text-[#444]">侧面钢筋</th>
          <th rowSpan={2} className={hd}>箍筋</th>
          <th rowSpan={2} className={hd}>肢数</th>
          <th rowSpan={2} className={hd}>次梁宽度</th>
          <th rowSpan={2} className={hd}>次梁加筋</th>
          <th rowSpan={2} className="border border-[#6eb0f4] bg-[#80baf8] p-0 font-normal text-white">吊筋</th>
          <th rowSpan={2} className={hd}>吊筋锚固</th>
          <th rowSpan={2} className={hd}>箍筋加密长度</th>
          <th rowSpan={2} className={hd}>腋长</th>
          <th rowSpan={2} className={hd}>腋高</th>
          <th rowSpan={2} className={`${hd} whitespace-nowrap`}>加腋钢筋</th>
        </tr>
        <tr className="h-[27px]">
          {['右支座钢筋', '下通长筋', '下部钢筋', '侧面通长筋', '侧面原位标注筋', '拉筋'].map(t => <th key={t} className={hd}>{t}</th>)}
        </tr>
      </thead>
      <tbody>
        {[1, 2, 3, 4, 5, 6].map(n => (
          <tr key={n} className="h-[21px]">
            <td className={`overflow-hidden border-b border-[#c8c8c8] p-0 text-[12px] ${n === 1 ? 'bg-[#7eb8f8] text-white' : 'bg-[#f0f0f0]'}`}>{n}</td>
            {n === 1 && <td rowSpan={6} className="border-b border-r border-[#c8c8c8] p-0 pl-[3px] leading-[17px]">&lt;1,D;<br />7,D&gt;</td>}
            {n === 1 && <td rowSpan={6} className="border-b border-r border-[#c8c8c8] p-0 pl-[3px]">KL-1</td>}
            <td className={cell}>{n}</td>
            <td className={cell} />
            <td className={cell}>{n === 1 && <>4<Rebar />25</>}</td>
            <td className={cell} /><td className={cell} /><td className={cell} /><td className={cell} />
            <td className={`${cell}`}><Rebar />8@100/</td>
            <td className={cell}>2</td>
            <td className={cell}>{n === 1 ? '200' : ''}</td>
            <td className={cell}>{n === 1 ? '6' : ''}</td>
            {n === 1
              ? <td className="relative border-x-2 border-b-2 border-[#6eb0f4] p-0 pl-[5px]">2C12
                  <span className="absolute right-[1px] top-[3px] flex h-[13px] w-[15px] items-center justify-center rounded-[2px] border border-[#6eb0f4] text-[9px] font-bold leading-none text-[#4a90d9]">···</span>
                  <span className="absolute bottom-[-3px] right-[-3px] h-[4px] w-[4px] bg-[#6eb0f4]" />
                </td>
              : <td className={cell} />}
            <td className={cell}>{n === 1 ? '20*d' : ''}</td>
            <td className={cell}>max(2*h,500)</td>
            <td className={cell} /><td className={cell} /><td className={cell} />
          </tr>
        ))}
      </tbody>
    </table>
  )
}

function BottomPanel() {
  return (
    <div className="flex min-h-0 flex-1 flex-col overflow-hidden bg-white">
      <div className="h-[12px] flex-none bg-[#d5d7dc]" />
      <div className="flex h-[21px] flex-none items-center border-b border-[#cfcfcf] bg-[#f0f0f0] pl-[9px] text-[#666]">梁平法表格</div>
      <div className="flex h-[32px] flex-none items-center gap-[14px] border-b border-[#cfcfcf] bg-[#f0f0f0] pl-[5px] text-[#444]">
        <span>复制跨数据</span><span className="text-[#b4b4b4]">粘贴跨数据</span><span>输入当前列数据</span><span>删除当前列数据</span><span>页面设置</span><span>调换起始跨</span><span>悬臂钢筋代号</span>
      </div>
      <div className="flex-1 overflow-hidden pl-[1px]"><BeamTable /></div>
    </div>
  )
}

export default function App() {
  return (
    <div className="relative flex h-[937px] w-[1856px] flex-col overflow-hidden bg-white font-['Noto_Sans_CJK_SC','Noto_Sans',sans-serif] text-[12px] leading-[16px] text-[#333]">
      <TitleBar />
      <Ribbon />
      <div className="flex h-[29px] flex-none items-center gap-[6.5px] bg-[#c8cbd0] pl-[3px] pt-[1px]">
        {['首层', '梁', '梁', 'KL-1', '分层1'].map((t, i) => <Combo key={i} label={t} />)}
      </div>
      <div className="flex min-h-0 flex-1 border-t border-[#8c8f93] bg-[#f0f0f0]">
        <LeftPanel />
        <div className="w-[5px] flex-none" />
        <MiddlePanel />
        <div className="flex w-[4px] flex-none flex-col">
          <div className="mt-[200px] h-[99px] w-[3px] bg-[#505a66]" />
        </div>
        <div className="flex min-w-0 flex-1 flex-col">
          <Canvas />
          <div className="relative h-[4px] flex-none bg-white">
            <div className="absolute left-[694px] top-0 h-[4px] w-[101px] bg-[#6b7078]" />
          </div>
          <BottomPanel />
        </div>
      </div>
      <svg width="1856" height="937" viewBox="0 0 1856 937" className="pointer-events-none absolute left-0 top-0 z-20">
        <path d="M1280.500 95L1293 108L1288.500 109L1342 257L1284 112L1279 113Z" fill="#f93a3a" />
        <path d="M1437.500 807L1445 824L1441 822L1429 905L1435 823L1429 823Z" fill="#f93a3a" />
      </svg>
    </div>
  )
}
